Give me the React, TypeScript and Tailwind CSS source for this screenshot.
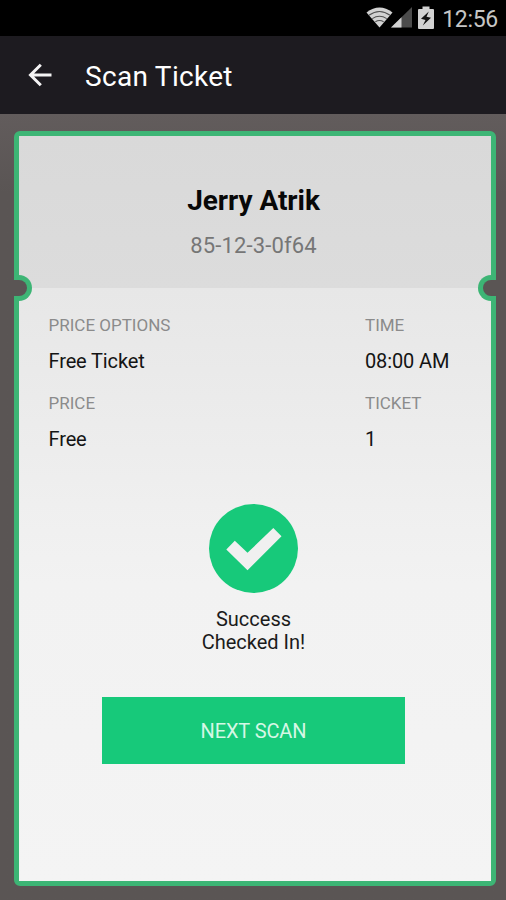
function StatusBar() {
  return (
    <div className="flex h-9 items-center justify-end bg-black pr-[8px]">
      <svg className="-mt-[1px] h-[21px] w-[27px]" viewBox="0 0 28 21" fill="none" preserveAspectRatio="none">
        <path d="M0.5 5.5Q14 -4.5 27.5 5.5L14 20.5Z" fill="#d2d2d2" />
        <path d="M3 8.3Q14 0.8 25 8.3M6.5 11.6Q14 6.8 21.5 11.6M9.7 14.8Q14 12.2 18.3 14.8" stroke="#505050" strokeWidth="1.1" />
      </svg>
      <svg className="-ml-[2px] -mt-[1px] h-[21px] w-[21px]" viewBox="0 0 21 21">
        <path d="M0 20.5L21 0V20.5Z" fill="#4c4c4c" />
        <path d="M0 20.5L10.5 10.2V20.5Z" fill="#d2d2d2" />
      </svg>
      <svg className="-mt-[1px] ml-[6px] h-[23px] w-[16px]" viewBox="0 0 16 23">
        <path d="M1 3H4.5V0.5H11.5V3H15Q16 3 16 4V22Q16 23 15 23H1Q0 23 0 22V4Q0 3 1 3Z" fill="#d2d2d2" />
        <path d="M10.8 5.5L3 12.7L7.5 14L4.8 19.5L13 11.8L8.5 10.7Z" fill="#111" />
      </svg>
      <span className="ml-[8px] mt-[2px] text-[23px] leading-none tracking-[-0.3px] text-[#c6c6c6]">12:56</span>
    </div>
  );
}

function Field({ label, value }: { label: string; value: string }) {
  return (
    <div className="h-[78px]">
      <div className="text-[17px] leading-[20px] text-[#8b8b8b]">{label}</div>
      <div className="mt-[14px] text-[20px] leading-[24px] tracking-[-0.13px] text-[#141414]">{value}</div>
    </div>
  );
}

export default function App() {
  return (
    <div className="flex h-[900px] w-[506px] flex-col overflow-hidden bg-[#5b5554] font-['Roboto',sans-serif]">
      <StatusBar />
      <header className="flex h-[78px] shrink-0 items-center bg-[#1d1b20] pl-[28px] text-white">
        <svg className="h-[24px] w-[24px]" viewBox="0 0 24 24" fill="none" stroke="#f4f4f4" strokeWidth="3">
          <path d="M23.5 12H3M12.8 1.8L2.5 12L12.8 22.2" />
        </svg>
        <h1 className="ml-[33px] pt-[3px] text-[28px] leading-[34px] tracking-[0.3px]">Scan Ticket</h1>
      </header>
      <main className="grow bg-linear-to-b from-[#625c5c] to-[#5a5554] to-10% pl-[14px] pt-[17px]">
        <section className="relative flex h-[755px] w-[482px] flex-col rounded-[6px] border-5 border-[#3db575] bg-[#f4f4f4]">
          <div className="flex h-[152px] flex-col items-center bg-linear-to-b from-[#d9d9d9] to-[#dcdcdc] pr-[3px] pt-[49px]">
            <h2 className="text-[28px] font-bold leading-[32px] tracking-[-0.05px] text-[#080808]">Jerry Atrik</h2>
            <p className="mt-[16px] text-[22px] leading-[26px] tracking-[0.15px] text-[#767676]">85-12-3-0f64</p>
          </div>
          <div className="flex grow flex-col items-center bg-linear-to-b from-[#e7e7e7] via-[#f2f2f2] via-50% to-[#f4f4f4] pr-[3px]">
            <div className="grid w-full grid-cols-[316.5px_1fr] pl-[29.5px] pt-[27px]">
              <Field label="PRICE OPTIONS" value="Free Ticket" />
              <Field label="TIME" value="08:00 AM" />
              <Field label="PRICE" value="Free" />
              <Field label="TICKET" value="1" />
            </div>
            <svg className="mt-[33px] h-[89px] w-[89px]" viewBox="0 0 89 89">
              <circle cx="44.5" cy="44.5" r="44.5" fill="#17c97a" />
              <path d="M17.3 45.5L25.8 36.8L38.5 48.8L64.3 24L72.5 32.2L38.5 66.2Z" fill="#f0f0f0" />
            </svg>
            <p className="mt-[15px] text-center text-[20px] leading-[23px] text-[#1b1b1b]">
              Success
              <br />
              Checked In!
            </p>
            <button className="mt-[43px] h-[67px] w-[303px] bg-[#17c97a] text-[20px] tracking-[-0.1px] text-[#d5f7e5]">NEXT SCAN</button>
          </div>
          <i className="absolute -left-[5px] top-[139px] h-[26px] w-[18px] rounded-r-full border-5 border-l-0 border-[#3db575] bg-[#5a5554]" />
          <i className="absolute -right-[5px] top-[139px] h-[26px] w-[18px] rounded-l-full border-5 border-r-0 border-[#3db575] bg-[#5a5554]" />
        </section>
      </main>
    </div>
  );
}
